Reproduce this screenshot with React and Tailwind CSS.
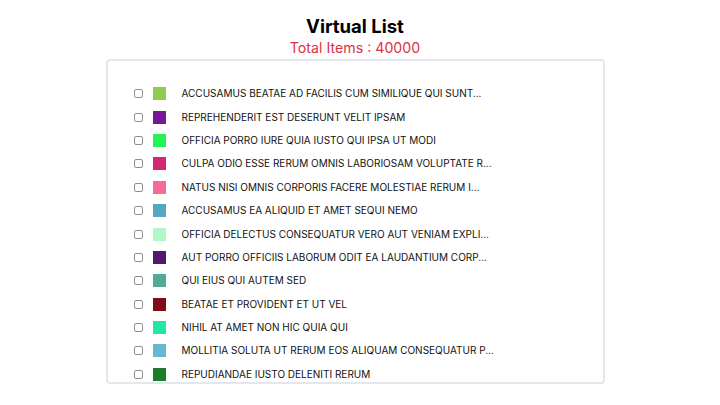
const items = [
  { title: 'accusamus beatae ad facilis cum similique qui sunt', color: '#92c952' },
  { title: 'reprehenderit est deserunt velit ipsam', color: '#771796' },
  { title: 'officia porro iure quia iusto qui ipsa ut modi', color: '#24f355' },
  { title: 'culpa odio esse rerum omnis laboriosam voluptate repudiandae', color: '#d32776' },
  { title: 'natus nisi omnis corporis facere molestiae rerum in', color: '#f66b97' },
  { title: 'accusamus ea aliquid et amet sequi nemo', color: '#56a8c2' },
  { title: 'officia delectus consequatur vero aut veniam explicabo molestias', color: '#b0f7cc' },
  { title: 'aut porro officiis laborum odit ea laudantium corporis', color: '#54176f' },
  { title: 'qui eius qui autem sed', color: '#51aa97' },
  { title: 'beatae et provident et ut vel', color: '#810b14' },
  { title: 'nihil at amet non hic quia qui', color: '#1ee8a4' },
  { title: 'mollitia soluta ut rerum eos aliquam consequatur perspiciatis maiores', color: '#66b7d2' },
  { title: 'repudiandae iusto deleniti rerum', color: '#197d29' },
];

const shorten = (s) => (s.length >= 50 ? s.slice(0, 50) + '...' : s);

function Row({ item }) {
  return (
    <div className="flex items-center h-[23.4px] shrink-0">
      <input
        type="checkbox"
        className="appearance-none w-[9px] h-[9px] rounded-[2px] border border-[#8f8f8f] bg-white shrink-0"
      />
      <div
        className="w-[13px] h-[13px] ml-[10px] shrink-0"
        style={{ background: item.color }}
      />
      <div className="ml-[16px] whitespace-nowrap uppercase text-[10px] text-[#111]">
        {shorten(item.title)}
      </div>
    </div>
  );
}

export default function App() {
  return (
    <div className="w-[710px] h-[405px] bg-white flex flex-col items-center pt-[14px] font-['Inter',sans-serif]">
      <h1 className="text-[18.5px] leading-[24px] font-bold text-black">Virtual List</h1>
      <p className="text-[14.2px] leading-[19px] text-[#d9343f]">Total Items : 40000</p>
      <div className="mt-[2px] w-[499px] h-[325px] border-2 border-[#e3e7ee] rounded-[4px] overflow-hidden">
        <div className="flex flex-col pt-[21px] pl-[26px]">
          {items.map((item, i) => (
            <Row key={i} item={item} />
          ))}
        </div>
      </div>
    </div>
  );
}
